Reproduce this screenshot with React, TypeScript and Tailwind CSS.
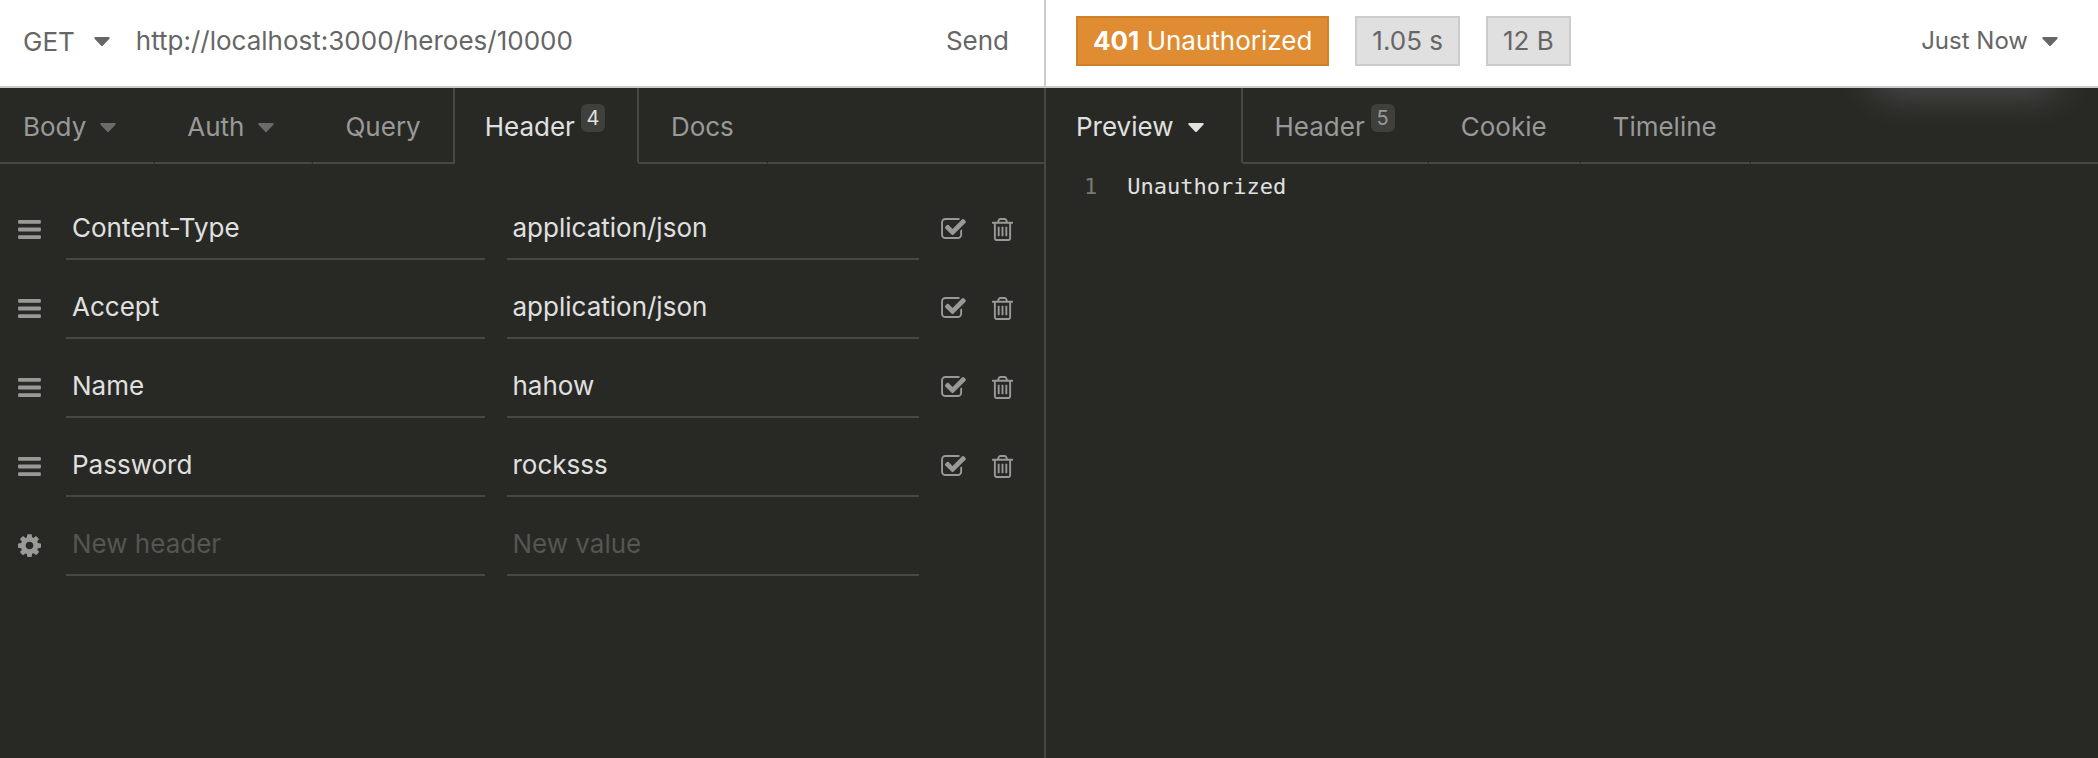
import { useState, type ReactNode } from "react";

type HeaderRow = { name: string; value: string };

const headerRows: HeaderRow[] = [
  { name: "Content-Type", value: "application/json" },
  { name: "Accept", value: "application/json" },
  { name: "Name", value: "hahow" },
  { name: "Password", value: "rocksss" },
];

function Caret({ className = "" }: { className?: string }) {
  return (
    <svg viewBox="0 0 16 9" aria-hidden="true" className={`h-[9px] w-4 shrink-0 fill-current ${className}`}>
      <path d="M1.4 0h13.2q.8 0 1.1.6t-.3 1.2L9 8.4q-.4.5-1 .5t-1-.5L.6 1.800Q0 1.200.3.600T1.400 0z" />
    </svg>
  );
}

function BarsIcon() {
  return (
    <svg viewBox="0 0 1536 1280" aria-hidden="true" className="h-[19px] w-[23px] fill-current">
      <rect width="1536" height="256" rx="64" />
      <rect y="512" width="1536" height="256" rx="64" />
      <rect y="1024" width="1536" height="256" rx="64" />
    </svg>
  );
}

function CheckIcon() {
  return (
    <svg viewBox="0 0 1664 1408" aria-hidden="true" className="h-[21px] w-[25px] fill-current">
      <path d="M1408 802v318q0 119-84.500 203.500T1120 1408H288q-119 0-203.500-84.500T0 1120V288Q0 169 84.500 84.500T288 0h832q63 0 117 25 15 7 18 23 3 17-9 29l-49 49q-10 10-23 10-3 0-9-2-23-6-45-6H288q-66 0-113 47t-47 113v832q0 66 47 113t113 47h832q66 0 113-47t47-113V866q0-13 9-22l64-64q10-10 23-10 6 0 12 3 20 8 20 29zm231-489l-814 814q-24 24-57 24t-57-24L281 697q-24-24-24-57t24-57l110-110q24-24 57-24t57 24l263 263 647-647q24-24 57-24t57 24l110 110q24 24 24 57t-24 57z" />
    </svg>
  );
}

function TrashIcon() {
  return (
    <svg viewBox="0 128 1408 1536" aria-hidden="true" className="h-[23px] w-[21px] fill-current">
      <path d="M512 736v576q0 14-9 23t-23 9h-64q-14 0-23-9t-9-23V736q0-14 9-23t23-9h64q14 0 23 9t9 23zm256 0v576q0 14-9 23t-23 9h-64q-14 0-23-9t-9-23V736q0-14 9-23t23-9h64q14 0 23 9t9 23zm256 0v576q0 14-9 23t-23 9h-64q-14 0-23-9t-9-23V736q0-14 9-23t23-9h64q14 0 23 9t9 23zm128 724V512H256v948q0 22 7 40.500t14.500 27 10.500 8.500h832q3 0 10.500-8.500t14.500-27 7-40.500zM480 384h448l-48-117q-7-9-17-11H546q-10 2-17 11zm928 32v64q0 14-9 23t-23 9h-96v948q0 83-47 143.500t-113 60.500H288q-66 0-113-58.500T128 1464V512H32q-14 0-23-9t-9-23v-64q0-14 9-23t23-9h309l70-167q15-37 54-63t79-26h320q40 0 79 26t54 63l70 167h309q14 0 23 9t9 23z" />
    </svg>
  );
}

function CogIcon() {
  return (
    <svg viewBox="0 -128 1536 1536" aria-hidden="true" className="h-[23px] w-[23px] fill-current">
      <path d="M1024 640q0-106-75-181t-181-75-181 75-75 181 75 181 181 75 181-75 75-181zm512-109v222q0 12-8 23t-20 13l-185 28q-19 54-39 91 35 50 107 138 10 12 10 25t-9 23q-27 37-99 108t-94 71q-12 0-26-9l-138-108q-44 23-91 38-16 136-29 186-7 28-36 28H657q-14 0-24.500-8.500T621 1391l-28-184q-49-16-90-37l-141 107q-10 9-25 9-14 0-25-11-126-114-165-168-7-10-7-23 0-12 8-23 15-21 51-66.500t54-70.500q-27-50-41-99L29 797q-13-2-21-12.500T0 761V539q0-12 8-23t19-13l186-28q14-46 39-92-40-57-107-138-10-12-10-24 0-10 9-23 26-36 98.500-107.500T337 19q13 0 26 10l138 107q44-23 91-38 16-136 29-186 7-28 36-28h222q14 0 24.500 8.500T915-87l28 184q49 16 90 37l142-107q9-9 24-9 13 0 25 10 129 119 165 170 7 8 7 22 0 12-8 23-15 21-51 66.500t-54 70.500q26 50 41 98l183 28q13 2 21 12.500t8 23.500z" />
    </svg>
  );
}

function Tab({
  children,
  active,
  menu,
  count,
  start = "pl-8",
}: {
  children: ReactNode;
  active?: boolean;
  menu?: boolean;
  count?: number;
  start?: string;
}) {
  const color = active
    ? "border-r-[#474844] border-b-[#282925] text-[#e0e0e0]"
    : "border-r-[#282925] border-b-[#474844] text-[#999999]";
  return (
    <button
      type="button"
      role="tab"
      aria-selected={!!active}
      className={`flex h-full items-center border-r-2 border-b-2 pt-1 ${menu ? "pr-[37px]" : "pr-8"} ${start} ${color}`}
    >
      {children}
      {menu && <Caret className={active ? "ml-[14px]" : "ml-[14px] opacity-60"} />}
      {count !== undefined && (
        <span className="mb-[18px] ml-[6px] flex h-7 w-6 items-center justify-center rounded-md bg-[#3f403c] text-[20px]">
          {count}
        </span>
      )}
    </button>
  );
}

function StatusTag({ children, tone }: { children: ReactNode; tone: "warning" | "plain" }) {
  const color =
    tone === "warning" ? "border-[#d07f2a] bg-[#e08c32] text-white" : "border-[#cccccc] bg-[#e0e0e0] text-[#666666]";
  return <span className={`flex h-[50px] items-center border-2 px-[15px] whitespace-pre ${color}`}>{children}</span>;
}

const rowClass =
  "grid h-[79px] grid-cols-[44px_418fr_412fr_25px_21px] items-center gap-x-[22px] pr-[35px] text-[#999999]";
const fieldClass =
  "h-full w-full min-w-0 border-b-2 border-[#474844] bg-transparent pt-4 pl-[6px] text-[#e0e0e0] outline-none placeholder:text-[#555651]";

function Row({ row, index }: { row: HeaderRow; index: number }) {
  const [enabled, setEnabled] = useState(true);
  return (
    <div className={rowClass}>
      <button type="button" aria-label={`Reorder header ${index + 1}`} className="pt-[18px] pl-[18px]">
        <BarsIcon />
      </button>
      <input aria-label={`Header ${index + 1} name`} defaultValue={row.name} className={fieldClass} />
      <input aria-label={`Header ${index + 1} value`} defaultValue={row.value} className={fieldClass} />
      <label className="relative pt-4">
        <input
          type="checkbox"
          aria-label={`Enable header ${index + 1}`}
          checked={enabled}
          onChange={(e) => setEnabled(e.target.checked)}
          className="absolute inset-0 appearance-none"
        />
        <span className={enabled ? "" : "opacity-40"}>
          <CheckIcon />
        </span>
      </label>
      <button type="button" aria-label={`Delete header ${index + 1}`} className="pt-[18px] pl-1">
        <TrashIcon />
      </button>
    </div>
  );
}

function RequestPane() {
  return (
    <section aria-label="Request" className="flex min-w-0 flex-col border-r-2 border-[#474844]">
      <div className="-mr-[2px] flex h-[88px] items-center border-r-2 border-b-2 border-[#cccccc] bg-white pb-1 pl-[23px] text-[#666666]">
        <div className="relative flex items-center">
          <select
            aria-label="Method"
            defaultValue="GET"
            className="field-sizing-content appearance-none bg-transparent pt-[2px] pr-[35px] outline-none"
          >
            <option>GET</option>
            <option>POST</option>
            <option>PUT</option>
            <option>DELETE</option>
          </select>
          <Caret className="pointer-events-none absolute right-0" />
        </div>
        <input
          type="text"
          aria-label="Request URL"
          defaultValue="http://localhost:3000/heroes/10000"
          className="ml-[26px] min-w-0 flex-1 bg-transparent outline-none"
        />
        <button type="button" className="px-[35px]">
          Send
        </button>
      </div>
      <div role="tablist" aria-label="Request sections" className="flex h-[76px]">
        <Tab start="pl-[23px]" menu>
          Body
        </Tab>
        <Tab menu>Auth</Tab>
        <div className="-mr-[2px] flex h-full">
          <Tab>Query</Tab>
        </div>
        <div className="flex h-full border-l-2 border-[#474844]">
          <Tab active count={4} start="pl-[30px]">
            Header
          </Tab>
        </div>
        <Tab>Docs</Tab>
        <div className="flex-1 border-b-2 border-[#474844]" />
      </div>
      <div className="pt-[17px]">
        {headerRows.map((row, i) => (
          <Row key={row.name} row={row} index={i} />
        ))}
        <div className={rowClass}>
          <button type="button" aria-label="Header options" className="pt-[18px] pl-[18px]">
            <CogIcon />
          </button>
          <input aria-label="New header name" placeholder="New header" className={fieldClass} />
          <input aria-label="New header value" placeholder="New value" className={fieldClass} />
        </div>
      </div>
    </section>
  );
}

function ResponsePane() {
  return (
    <section aria-label="Response" className="flex min-w-0 flex-col">
      <div className="z-10 flex h-[88px] items-center gap-[26px] border-b-2 border-[#cccccc] bg-white pr-10 pb-1 pl-[30px] text-[#666666]">
        <StatusTag tone="warning">
          <strong className="font-bold">401</strong> Unauthorized
        </StatusTag>
        <StatusTag tone="plain">1.05 s</StatusTag>
        <StatusTag tone="plain">12 B</StatusTag>
        <button type="button" aria-haspopup="menu" className="ml-auto flex items-center text-[24px]">
          Just Now
          <Caret className="ml-[14px]" />
        </button>
      </div>
      <div role="tablist" aria-label="Response sections" className="relative flex h-[76px]">
        <Tab start="pl-[30px]" active menu>
          Preview
        </Tab>
        <Tab count={5}>Header</Tab>
        <Tab>Cookie</Tab>
        <Tab>Timeline</Tab>
        <div className="flex-1 border-b-2 border-[#474844]" />
        <div className="absolute -top-5 right-[46px] h-4 w-[172px] shadow-[0_0_40px_4px_rgba(255,255,255,0.3)]" />
      </div>
      <pre className="flex gap-[30px] pt-[9px] pl-[38px] font-['DejaVu_Sans_Mono',monospace] text-[22px] leading-7 text-[#e0e0e0]">
        <span className="text-[#777874]">1</span>
        <code className="font-['DejaVu_Sans_Mono',monospace]">Unauthorized</code>
      </pre>
    </section>
  );
}

export default function App() {
  return (
    <main className="grid min-h-screen grid-cols-[1046fr_1052fr] overflow-hidden bg-[#282925] font-['Inter',sans-serif] text-[26px] leading-8">
      <RequestPane />
      <ResponsePane />
    </main>
  );
}
